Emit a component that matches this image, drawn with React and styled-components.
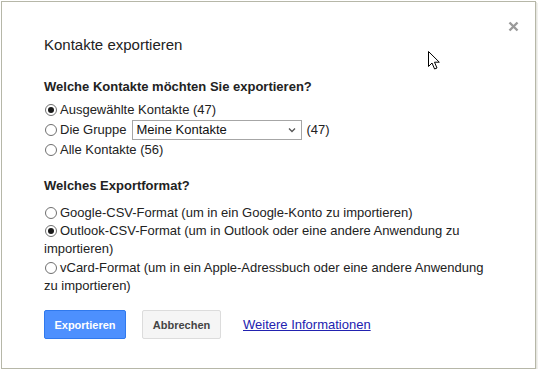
import React, { useState } from "react";
import styled, { createGlobalStyle } from "styled-components";

const GlobalStyle = createGlobalStyle`
  body {
    margin: 0;
    background: #fff;
    font-family: "Liberation Sans", Arial, sans-serif;
  }
`;

const Dialog = styled.div`
  position: relative;
  box-sizing: border-box;
  margin: 1px 0 0 1px;
  width: 535px;
  height: 368px;
  padding: 34px 44px 0 42px;
  border: 1px solid #b6b7a8;
  background: #fff;
  box-shadow: 1px 1px 0 #e6e6e0, 2px 2px 0 #f1f1ee;
  color: #222;
`;

const Close = styled.button`
  position: absolute;
  top: 17px;
  right: 15px;
  width: 14px;
  height: 14px;
  padding: 0;
  border: none;
  background: none;
  cursor: pointer;
  display: flex;
  align-items: center;
  justify-content: center;
`;

const Title = styled.h2`
  margin: 0;
  font-size: 15px;
  line-height: 18px;
  font-weight: normal;
  color: #222;
`;

const Heading = styled.h3`
  margin: ${(p) => p.$top}px 0 0;
  font-size: 13px;
  line-height: 16px;
  font-weight: bold;
  color: #222;
`;

const Group = styled.div`
  margin-top: ${(p) => p.$top}px;
  font-size: 13px;
`;

const Row = styled.label`
  display: flex;
  align-items: center;
  height: 20px;
  line-height: 20px;
  cursor: default;
`;

const WrapRow = styled.label`
  display: block;
  line-height: 18px;
  margin-top: ${(p) => p.$top || 0}px;
  cursor: default;
`;

const Radio = styled.span`
  display: inline-block;
  box-sizing: border-box;
  width: 12px;
  height: 12px;
  margin: 0 3px 0 1px;
  border: 1px solid #6f6f6f;
  border-radius: 50%;
  background: #fff;
  position: relative;
  vertical-align: -2px;
  flex-shrink: 0;

  &::after {
    content: "";
    display: ${(p) => (p.$checked ? "block" : "none")};
    position: absolute;
    left: 2px;
    top: 2px;
    width: 6px;
    height: 6px;
    border-radius: 50%;
    background: #1a1a1a;
  }
`;

const SelectBox = styled.div`
  box-sizing: border-box;
  display: flex;
  align-items: center;
  justify-content: space-between;
  width: 170px;
  height: 20px;
  margin: 0 4px 0 6px;
  padding: 0 5px 0 3px;
  border: 1px solid #a6a6a6;
  background: #fff;
  font-size: 13px;
  color: #111;
`;

const Actions = styled.div`
  display: flex;
  align-items: center;
  margin-top: 15px;
`;

const Button = styled.button`
  box-sizing: border-box;
  height: 29px;
  min-width: ${(p) => p.$w}px;
  margin-right: ${(p) => p.$gap}px;
  padding: 0 9px;
  border-radius: 2px;
  font-family: inherit;
  font-size: 11px;
  font-weight: bold;
  cursor: pointer;
  border: 1px solid ${(p) => (p.$primary ? "#3079ed" : "#dcdcdc")};
  background: ${(p) => (p.$primary ? "#4d90fe" : "#f5f5f5")};
  color: ${(p) => (p.$primary ? "#fff" : "#444")};
`;

const Link = styled.a`
  font-size: 13px;
  color: #2222b0;
  text-decoration: underline;
`;

const Cursor = styled.svg`
  position: absolute;
  left: 426px;
  top: 49px;
`;

function App() {
  const [group, setGroup] = useState("selected");
  const [format, setFormat] = useState("outlook");

  return (
    <>
      <GlobalStyle />
      <Dialog>
        <Close aria-label="Schließen">
          <svg width="11" height="11" viewBox="0 0 11 11">
            <path d="M1.5 1.5 L9.5 9.5 M9.5 1.5 L1.5 9.5" stroke="#9a9a9a" strokeWidth="2.4" />
          </svg>
        </Close>

        <Title>Kontakte exportieren</Title>

        <Heading $top={25}>Welche Kontakte möchten Sie exportieren?</Heading>
        <Group $top={5}>
          <Row onClick={() => setGroup("selected")}>
            <Radio $checked={group === "selected"} />
            Ausgewählte Kontakte (47)
          </Row>
          <Row onClick={() => setGroup("group")}>
            <Radio $checked={group === "group"} />
            Die Gruppe
            <SelectBox>
              <span>Meine Kontakte</span>
              <svg width="8" height="6" viewBox="0 0 8 6">
                <path d="M1 1.5 L4 4.5 L7 1.5" fill="none" stroke="#555" strokeWidth="1.3" />
              </svg>
            </SelectBox>
            (47)
          </Row>
          <Row onClick={() => setGroup("all")}>
            <Radio $checked={group === "all"} />
            Alle Kontakte (56)
          </Row>
        </Group>

        <Heading $top={18}>Welches Exportformat?</Heading>
        <Group $top={10}>
          <WrapRow onClick={() => setFormat("google")}>
            <Radio $checked={format === "google"} />
            Google-CSV-Format (um in ein Google-Konto zu importieren)
          </WrapRow>
          <WrapRow onClick={() => setFormat("outlook")}>
            <Radio $checked={format === "outlook"} />
            Outlook-CSV-Format (um in Outlook oder eine andere Anwendung zu importieren)
          </WrapRow>
          <WrapRow $top={1} onClick={() => setFormat("vcard")}>
            <Radio $checked={format === "vcard"} />
            vCard-Format (um in ein Apple-Adressbuch oder eine andere Anwendung zu importieren)
          </WrapRow>
        </Group>

        <Actions>
          <Button $primary $w={82} $gap={16}>Exportieren</Button>
          <Button $w={79} $gap={22}>Abbrechen</Button>
          <Link href="#">Weitere Informationen</Link>
        </Actions>

        <Cursor width="14" height="20" viewBox="0 0 14 20">
          <path
            d="M0.5 0.5 L0.5 15.5 L4 12 L6.6 18 L9 17 L6.5 11.2 L11.3 11.2 Z"
            fill="#fff"
            stroke="#000"
            strokeWidth="1"
            strokeLinejoin="miter"
          />
        </Cursor>
      </Dialog>
    </>
  );
}

export default App;
